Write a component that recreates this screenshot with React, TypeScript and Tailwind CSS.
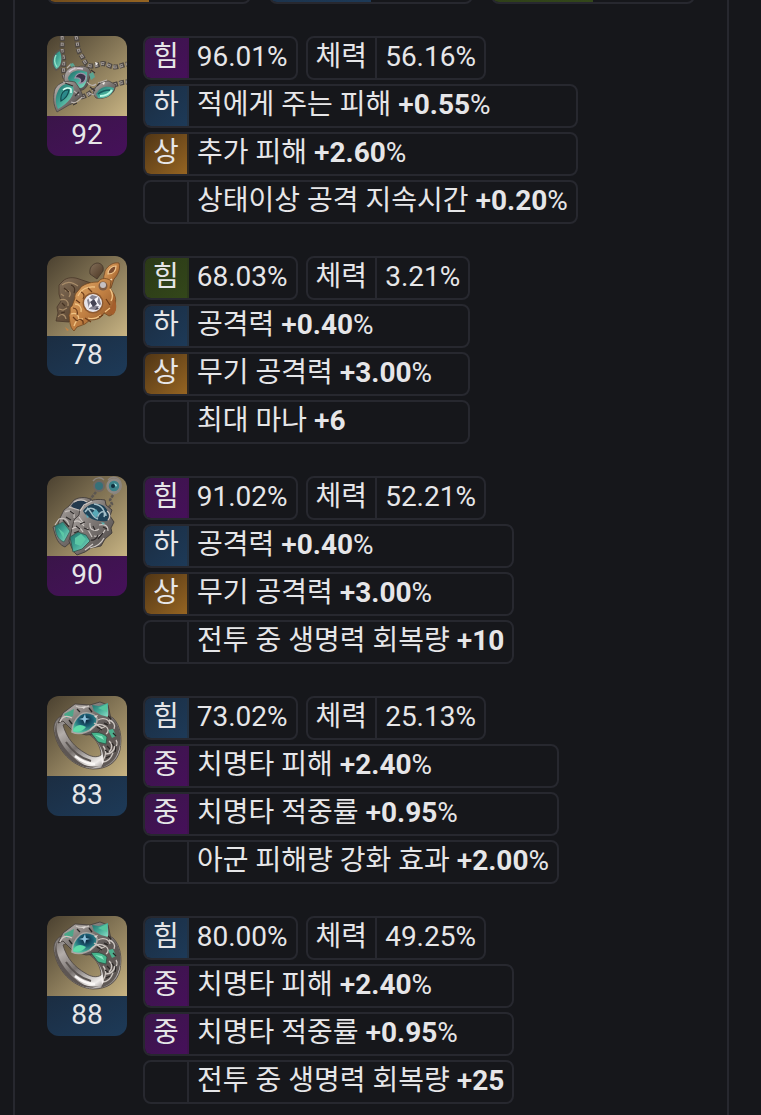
import React from 'react';

type Tone = 'purple' | 'blue' | 'amber' | 'green' | 'none';
type IconKind = 'necklace' | 'goldEarring' | 'silverEarring' | 'ring';

interface Effect {
  grade: string;
  tone: Tone;
  name: string;
  value: string;
  percent: boolean;
}

interface Accessory {
  id: number;
  icon: IconKind;
  quality: number;
  qualityTone: Tone;
  strength: string;
  strengthTone: Tone;
  vitality: string;
  effects: Effect[];
}

const badgeTone: Record<Tone, string> = {
  purple: 'bg-linear-to-br from-[#3a1549] to-[#46105a] border-[#40134f]',
  blue: 'bg-linear-to-br from-[#1b2d42] to-[#1d3a58] border-[#233345]',
  amber: 'bg-linear-to-br from-[#513615] to-[#966522] border-[#2c2620]',
  green: 'bg-linear-to-br from-[#2b3917] to-[#33471a] border-[#2d3b1b]',
  none: 'border-[#27282f]',
};

const accessories: Accessory[] = [
  {
    id: 1, icon: 'necklace', quality: 92, qualityTone: 'purple', strength: '96.01%', strengthTone: 'purple', vitality: '56.16%',
    effects: [
      { grade: '하', tone: 'blue', name: '적에게 주는 피해', value: '0.55', percent: true },
      { grade: '상', tone: 'amber', name: '추가 피해', value: '2.60', percent: true },
      { grade: '', tone: 'none', name: '상태이상 공격 지속시간', value: '0.20', percent: true },
    ],
  },
  {
    id: 2, icon: 'goldEarring', quality: 78, qualityTone: 'blue', strength: '68.03%', strengthTone: 'green', vitality: '3.21%',
    effects: [
      { grade: '하', tone: 'blue', name: '공격력', value: '0.40', percent: true },
      { grade: '상', tone: 'amber', name: '무기 공격력', value: '3.00', percent: true },
      { grade: '', tone: 'none', name: '최대 마나', value: '6', percent: false },
    ],
  },
  {
    id: 3, icon: 'silverEarring', quality: 90, qualityTone: 'purple', strength: '91.02%', strengthTone: 'purple', vitality: '52.21%',
    effects: [
      { grade: '하', tone: 'blue', name: '공격력', value: '0.40', percent: true },
      { grade: '상', tone: 'amber', name: '무기 공격력', value: '3.00', percent: true },
      { grade: '', tone: 'none', name: '전투 중 생명력 회복량', value: '10', percent: false },
    ],
  },
  {
    id: 4, icon: 'ring', quality: 83, qualityTone: 'blue', strength: '73.02%', strengthTone: 'blue', vitality: '25.13%',
    effects: [
      { grade: '중', tone: 'purple', name: '치명타 피해', value: '2.40', percent: true },
      { grade: '중', tone: 'purple', name: '치명타 적중률', value: '0.95', percent: true },
      { grade: '', tone: 'none', name: '아군 피해량 강화 효과', value: '2.00', percent: true },
    ],
  },
  {
    id: 5, icon: 'ring', quality: 88, qualityTone: 'blue', strength: '80.00%', strengthTone: 'blue', vitality: '49.25%',
    effects: [
      { grade: '중', tone: 'purple', name: '치명타 피해', value: '2.40', percent: true },
      { grade: '중', tone: 'purple', name: '치명타 적중률', value: '0.95', percent: true },
      { grade: '', tone: 'none', name: '전투 중 생명력 회복량', value: '25', percent: false },
    ],
  },
];

// Shared gradients, rendered once
const IconDefs = () => (
  <svg width="0" height="0" className="absolute" aria-hidden="true">
    <defs>
      <linearGradient id="silver" x1="0" y1="0" x2="1" y2="1">
        <stop offset="0" stopColor="#c4bebb" />
        <stop offset="0.45" stopColor="#7f7976" />
        <stop offset="1" stopColor="#484342" />
      </linearGradient>
      <linearGradient id="band" x1="0" y1="0" x2="0.8" y2="1">
        <stop offset="0" stopColor="#5f5a57" />
        <stop offset="0.3" stopColor="#b3adaa" />
        <stop offset="0.55" stopColor="#77716e" />
        <stop offset="0.85" stopColor="#f0edeb" />
        <stop offset="1" stopColor="#6d6664" />
      </linearGradient>
      <linearGradient id="gold" x1="0" y1="0" x2="1" y2="1">
        <stop offset="0" stopColor="#e2ad6d" />
        <stop offset="0.5" stopColor="#c07f42" />
        <stop offset="1" stopColor="#81471f" />
      </linearGradient>
      <linearGradient id="darkGold" x1="0" y1="0" x2="1" y2="1">
        <stop offset="0" stopColor="#84705a" />
        <stop offset="1" stopColor="#4b3522" />
      </linearGradient>
      <linearGradient id="teal" x1="0" y1="0" x2="1" y2="1">
        <stop offset="0" stopColor="#1d6a68" />
        <stop offset="0.5" stopColor="#43a796" />
        <stop offset="1" stopColor="#8be0c5" />
      </linearGradient>
      <radialGradient id="deepGem" cx="0.55" cy="0.35" r="0.65">
        <stop offset="0" stopColor="#0c2038" />
        <stop offset="0.45" stopColor="#1c5f74" />
        <stop offset="1" stopColor="#58cfa8" />
      </radialGradient>
    </defs>
  </svg>
);

const Chain = ({ d }: { d: string }) => (
  <g fill="none">
    <path d={d} stroke="#4d4743" strokeWidth="5" strokeDasharray="5 1.5" />
    <path d={d} stroke="#a09995" strokeWidth="3" strokeDasharray="3.5 3" />
    <path d={d} stroke="#56504c" strokeWidth="1" strokeDasharray="2 4.5" strokeDashoffset="-1" />
  </g>
);

const NecklaceArt = () => (
  <>
    <Chain d="M15 0c1 7-1 13 1 20s-1 12 2 22" />
    <Chain d="M29 0c2 7 1 14 5 19s3 10 10 11 9-5 17-1 11 1 19-1" />
    <Chain d="M34 61c8-1 10-7 18-8M66 49c5-1 9-3 14-3" />
    <path d="M13 14c-8 4-10 14-4 20 6-2 8-12 4-20z" fill="url(#teal)" stroke="#5c5550" strokeWidth="1.5" />
    <path d="M9 19c-2 4-2 8 1 12" fill="none" stroke="#8fe0c8" strokeWidth="1.5" />
    <path d="M17 43c0-8 6-14 14-12 7-3 15 2 12 9l-3 10c-3 5-9 6-13 2l-9-3z" fill="url(#silver)" stroke="#47413e" strokeWidth="0.8" />
    <path d="M21 42c3-8 11-9 19-6 1 8-2 16-7 16-6 0-10-3-12-10z" fill="url(#teal)" />
    <path d="M28 42c2-6 8-6 11-2 0 5-3 8-7 7 3-2 2-6-4-5z" fill="#3c3349" stroke="#9c8fa6" strokeWidth="1.2" />
    <path d="M22 36c4-4 10-4 14-3" fill="none" stroke="#d8c9d5" strokeWidth="1.5" />
    <path d="M8 53c4-7 12-9 20-7 3 4 6 8 8 14-6 2-7 7-14 9L10 76c-4-7-4-16-2-23z" fill="url(#silver)" stroke="#4a4542" strokeWidth="0.8" />
    <path d="M11 55c3-7 10-9 15-5 3 9-5 17-15 23-3-6-3-12 0-18z" fill="url(#teal)" />
    <path d="M14 65c-1-7 3-12 8-11-1 6-4 9-8 11z" fill="#2b898a" stroke="#134b50" strokeWidth="1.2" />
    <path d="M16 54c2-2 6-3 8-1v4" fill="none" stroke="#d9fff3" strokeWidth="1.5" />
    <path d="M46 58c2-9 8-13 16-13l7 4-2 6c-5 7-12 8-18 7z" fill="url(#silver)" stroke="#4a4542" strokeWidth="0.8" />
    <path d="M49 58c4-7 10-9 18-6-2 8-9 11-16 10z" fill="url(#teal)" />
    <path d="M53 60c6 0 10-3 12-6" fill="none" stroke="#bafbe5" strokeWidth="2" />
    <path d="M51 58c4-3 8-4 12-4" fill="none" stroke="#175a5c" strokeWidth="1.5" />
    <g fill="none" stroke="#b9b2ae" strokeWidth="1.2">
      <path d="M24 66c5 2 8-1 11-5M20 32l4-4M27 31l3 2M40 46c3 4 7 4 9 2M42 57l5 2M16 46l5 1M27 55l5 4M51 47l9-3" />
    </g>
    <g fill="none" stroke="#393433" strokeWidth="1.2">
      <path d="M18 47l8 3M28 60l4-4M43 51l5 4M26 69l4-2M50 50l3-3M44 34l4 3" />
    </g>
    <path d="M42 38l4-2 2 5-4 3zM23 28l3-1 2 3-4 1z" fill="#5aa492" />
    <path d="M48 26l3 1-2 3zM55 47l3-1-1 3z" fill="#f4f0ec" />
  </>
);

const GoldEarringArt = () => (
  <>
    <path d="M43 18c-1-6 2-10 7-11 5 0 7 4 6 8l-6 8z" fill="url(#darkGold)" stroke="#44362a" strokeWidth="0.8" />
    <path d="M12 29l4-4c4-4 11-4 16-2l12 4-10 26-12 13-13-1 2-8-1-6 4-6-2-7z" fill="url(#darkGold)" stroke="#49372a" strokeWidth="0.8" />
    <g fill="none" stroke="#a88c69" strokeWidth="1.2">
      <path d="M15 29c6-5 12-2 16 1M13 44c5-2 9 1 8 6M11 61c3-4 7-3 8 2M18 35c4-2 7 2 4 6M12 53l4 1 4-2M14 38l3 2" />
    </g>
    <g fill="none" stroke="#453222" strokeWidth="1.2">
      <path d="M17 32l5 4M15 47l3 3M14 57l4-1M24 29c3 1 5 4 3 8" />
    </g>
    <path d="M57 23c-1-3 1-5 1-8 3-6 9-9 14-8 2 7-2 13-5 16l-3 9-6-2z" fill="url(#gold)" stroke="#6f4423" strokeWidth="0.8" />
    <path d="M61 18c0-5 4-8 8-8 0 5-3 8-8 8z" fill="#7d4d2f" stroke="#efc48b" strokeWidth="1.2" />
    <path d="M61 26l4-3" stroke="#f2d4ab" strokeWidth="1.5" />
    <path d="M28 42c-1-5 4-7 6-11 5-4 12-5 17-5 3-5 10-4 13-1l-1 7 4 6c2 4 2 7 1 11 1 5-1 10-6 11l-5-3c-3 6-8 7-14 7l-5 4-8 3-3 4c-5-4-4-12-5-16 3-3-1-7 3-9z" fill="url(#gold)" stroke="#744720" strokeWidth="0.8" />
    <path d="M60 54c6-2 7-8 5-14 5 5 6 14 1 19z" fill="#a45e2b" />
    <g fill="none" stroke="#f0c384" strokeWidth="1.3">
      <path d="M31 40c3-7 10-10 17-9M28 48c4 0 7 3 6 8M24 58c5-2 8 1 8 6M27 70c1-5 5-7 9-7M63 33c3 4 3 9 1 12M41 62c5 2 9 0 13-3M58 56l5-4" />
    </g>
    <g fill="none" stroke="#6b3b19" strokeWidth="1.2">
      <path d="M34 36c3 1 4 4 2 7M26 52c4 0 5 4 4 7M30 65c3-3 7-1 6 3M59 43l4 6M38 62l6 4M41 32l4 4M29 44l4 3M26 61l4 4M52 61l4-2" />
    </g>
    <circle cx="56" cy="30" r="4.5" fill="#7d5b43" />
    <circle cx="56" cy="29" r="3" fill="#c6c0c2" />
    <circle cx="46" cy="47" r="10.5" fill="#8e5a30" />
    <circle cx="46" cy="47" r="9" fill="#e6e4ea" />
    <path d="M40 44l5-5 7 2 2 7-5 6-7-1z" fill="#858290" />
    <path d="M41 41l5 3 6-4-2 6 4 5-7-2-6 4 2-6z" fill="#f6f4fa" />
    <path d="M43 46l4-3 3 5-4 3zM50 51l2 2-4 1z" fill="#454354" />
    <path d="M18 71l4 3-2 1z" fill="#c68343" />
  </>
);

const SilverEarringArt = () => (
  <>
    <circle cx="52" cy="10" r="5" fill="#377078" stroke="#6d6661" strokeWidth="2" />
    <circle cx="67" cy="10" r="6.5" fill="#3c8189" stroke="#8e8883" strokeWidth="2.5" />
    <path d="M46 5c3-4 8-4 11-1M61 4c4-5 13-3 13 5 0 5-4 9-8 9" fill="none" stroke="#8a847f" strokeWidth="1.5" />
    <circle cx="66" cy="10" r="2" fill="#102b3b" />
    <path d="M67 7l3 2-1 2z" fill="#a2e5e5" />
    <path d="M49 16l-4 5-3 4M66 19l-3 5 2 4-4 4" fill="none" stroke="#5c5651" strokeWidth="2.5" strokeDasharray="3 1" />
    <path d="M13 42l4-8 5-4 5-6c7-4 14-3 19 1l2 9-16 25-14 12c-5-2-8-6-10-13l-2-7 5-2z" fill="url(#silver)" stroke="#3f3a38" strokeWidth="0.8" />
    <path d="M24 30c4-7 14-7 19-2-3 7-13 8-19 2z" fill="#23394d" />
    <path d="M8 50l8-4 7 9-6 11c-6-2-9-9-9-16z" fill="url(#teal)" stroke="#3c5e57" strokeWidth="0.8" />
    <path d="M11 52l6 5v6z" fill="#5bc8a5" />
    <g fill="none" stroke="#c4beba" strokeWidth="1.2">
      <path d="M12 43c5-2 9 1 10 6M18 36c6-3 10 1 9 6M22 31l13 4M8 49l4-6M27 26c5-3 9-3 13 0" />
    </g>
    <path d="M19 41l5 3M23 35l4 3M16 44l6 7" fill="none" stroke="#2f2c2b" strokeWidth="1.2" />
    <path d="M27 44l5-5 1-6 7-6c5-4 12-4 18-3l1 5 6 5-2 6 4 6-3 6 1 5-7 6-4 7-10 2-6 4-8 3c-4-3-6-9-8-14l2-8z" fill="url(#silver)" stroke="#393432" strokeWidth="0.8" />
    <path d="M36 35c5-8 14-9 21-5 5 5 6 10 3 15-8 1-19-1-24-10z" fill="#1e4257" />
    <path d="M38 36c5-7 12-3 13 4 3-6 8-5 8 0M40 32c5 3 4 9 11 11M47 28c7 1 12 6 10 13" fill="none" stroke="#a3bfc8" strokeWidth="1.5" />
    <path d="M45 37l4-4 3 4-3 5zM39 38l3 3-2 1z" fill="#58a9b8" />
    <path d="M23 61l8-5 8 3 4 6-8 8-9 3z" fill="url(#teal)" stroke="#315048" strokeWidth="0.8" />
    <path d="M28 62l6-4 5 5-5 7-6-2z" fill="#5bc7a5" />
    <g fill="none" stroke="#cdc7c3" strokeWidth="1.2">
      <path d="M27 46c4-3 7 0 10 4M25 53c5-4 9-1 11 3M43 47c-1 7 5 9 9 6M52 49c5-1 9 0 9 6M47 60c5 1 9-2 11-6M43 72c6-1 11-4 14-10M32 41l5 7M40 52l5 9M33 35l4-6 8-4M60 35c3 2 4 6 1 9M38 74l8-6" />
    </g>
    <g fill="none" stroke="#2e2a2a" strokeWidth="1.2">
      <path d="M37 52l5 2M44 64c3 1 6-2 7-5M33 48l5-2M29 50l4 3M51 63l5-6M56 51l4 2M46 50l2 4M27 57l5-2" />
    </g>
    <path d="M54 46l4 1-2 2z" fill="#5fb3b0" />
  </>
);

const RingArt = () => (
  <>
    <path
      fillRule="evenodd"
      d="M21 18C8 20 5 29 8 39c4 18 20 33 38 34 14 0 24-6 27-19 2-12 1-24-7-32-13-9-31-8-45-4zm-5 11c5-4 18 3 27 10 7 5 11 13 11 20-4 3-10 2-16-2-10-6-18-14-22-28z"
      fill="url(#band)"
      stroke="#4a4441"
      strokeWidth="0.8"
    />
    <path d="M10 26c-3 15 10 32 24 41 6 4 13 4 18 3-7 3-15 2-22-2C16 60 3 41 10 26z" fill="#5d5653" />
    <path d="M19 46c6 9 14 16 25 19" fill="none" stroke="#5a5451" strokeWidth="2" />
    <path d="M28 60c6 5 13 8 20 8" fill="none" stroke="#fbf8f6" strokeWidth="2.5" />
    <path d="M42 38l22-16c8 6 11 16 9 27-2 12-8 19-19 23 5-10 2-24-12-34z" fill="#5f5855" />
    <path d="M11 27l5-10 12-9 15 1 10-3 8 3 3 14-15 15-10 1-13-4-10-10z" fill="url(#silver)" stroke="#403a37" strokeWidth="0.8" />
    <path d="M17 18l10-5-1 7-7 2z" fill="#4aa688" />
    <path d="M45 9l7 1 9-3v14l-7-2-7-4z" fill="url(#teal)" />
    <path d="M51 12l9-4v8z" fill="#55c49d" />
    <path d="M25 36c0-6 2-12 8-17 5-4 14-2 17 3 1 7-5 12-11 14-5 2-10 2-14 0z" fill="url(#deepGem)" stroke="#aaa7a4" strokeWidth="1.5" />
    <path d="M26 35c2-6 7-8 13-4-3 4-8 6-13 4z" fill="#5fdcaa" />
    <path d="M38 18l1 4 4 1-4 1-1 4-2-4-4-1 4-1z" fill="#8fc3dd" />
    <path d="M44 37c5-1 11-1 16 4l-1 7-8-2z" fill="#46b78e" stroke="#304e43" strokeWidth="0.8" />
    <path d="M48 39l7 1 2 4z" fill="#89e5c0" />
    <path d="M61 34l5-1 3 7-4 2z" fill="#4cae8d" />
    <g fill="none" stroke="#cdc6c1" strokeWidth="1.3">
      <path d="M43 34c5-6 10-7 15-4 4 2 4 6 1 8M51 24c5-3 11-1 12 4M62 24c4 1 7 5 5 9M29 10c5 3 9 1 13 0M13 26c2-6 7-7 12-4" />
      <path d="M56 50c4 4 3 10 0 14M62 45c4 3 3 9 0 11M69 44c3 4-1 9-4 12M59 58c5 0 8-4 9-8M56 66c5 0 8-4 10-9M47 27l8 5M53 33l6-3" />
    </g>
    <g fill="none" stroke="#292625" strokeWidth="1.3">
      <path d="M50 31l5 3M60 50l3 3M59 62l4-2M66 37l3 3M42 12l3 4M61 20l3 3M57 27l4 2M65 47l2 3M58 54l3 2M69 50l-1 6M22 24l3 4M30 13l3 3" />
    </g>
    <path d="M54 60l3 5-2 4z" fill="#f5efee" />
    <path d="M34 11l5-1-2 3zM47 20l4-1-2 3z" fill="#ded8d4" />
  </>
);

const art: Record<IconKind, { label: string; Art: React.FC }> = {
  necklace: { label: '목걸이', Art: NecklaceArt },
  goldEarring: { label: '귀걸이', Art: GoldEarringArt },
  silverEarring: { label: '귀걸이', Art: SilverEarringArt },
  ring: { label: '반지', Art: RingArt },
};

const StatBox = ({ label, tone, value }: { label: string; tone: Tone; value: string }) => (
  <div className="flex overflow-hidden rounded-lg border-2 border-[#27282f]">
    <dt className={`border-r-2 px-2 pb-0.5 ${badgeTone[tone]}`}>{label}</dt>
    <dd className="px-2 pb-0.5">{value}</dd>
  </div>
);

const EffectRow = ({ effect }: { effect: Effect }) => (
  <li className="flex overflow-hidden rounded-lg border-2 border-[#27282f]">
    <span className={`w-11 shrink-0 border-r-2 pb-0.5 text-center ${badgeTone[effect.tone]}`}>{effect.grade}</span>
    <span className="px-2 pb-0.5 whitespace-nowrap">
      {effect.name} <span className="font-medium">+</span>
      <strong className="font-bold">{effect.value}</strong>
      {effect.percent && '%'}
    </span>
  </li>
);

const AccessoryItem = ({ item }: { item: Accessory }) => {
  const { label, Art } = art[item.icon];
  return (
    <article className="flex items-start gap-4">
      <div className="w-20 shrink-0 overflow-hidden rounded-xl">
        <svg viewBox="0 0 80 80" role="img" aria-label={label} className="block size-20 bg-linear-to-br from-[#4b4130] to-[#c8b483]">
          <Art />
        </svg>
        <div className={`h-10 text-center ${badgeTone[item.qualityTone]}`}>{item.quality}</div>
      </div>
      <div className="flex flex-col gap-1">
        <dl className="flex gap-2">
          <StatBox label="힘" tone={item.strengthTone} value={item.strength} />
          <StatBox label="체력" tone="none" value={item.vitality} />
        </dl>
        <ul className="flex flex-col gap-1">
          {item.effects.map((effect) => (
            <EffectRow key={effect.name} effect={effect} />
          ))}
        </ul>
      </div>
    </article>
  );
};

const summaryTones: Tone[] = ['amber', 'blue', 'green'];

const App: React.FC = () => {
  return (
    <main className="flex min-h-screen overflow-hidden bg-[#16171b] pr-8 pl-[13px] font-['Roboto','Noto_Sans_CJK_KR',sans-serif] text-[28px] leading-[38px] text-[#e6e6e8]">
      <IconDefs />
      <section className="flex grow flex-col gap-8 border-x-2 border-[#27282f] px-8 pb-2">
        {/* bars are scrolled up, only their lower edge shows */}
        <div className="-mt-10 grid grid-cols-3 gap-[18px]">
          {summaryTones.map((tone) => (
            <div key={tone} className="h-11 overflow-hidden rounded-lg border-2 border-[#27282f]">
              <div className={`h-full w-1/2 ${badgeTone[tone]}`} />
            </div>
          ))}
        </div>
        {accessories.map((item) => (
          <AccessoryItem key={item.id} item={item} />
        ))}
      </section>
    </main>
  );
};

export default App;
